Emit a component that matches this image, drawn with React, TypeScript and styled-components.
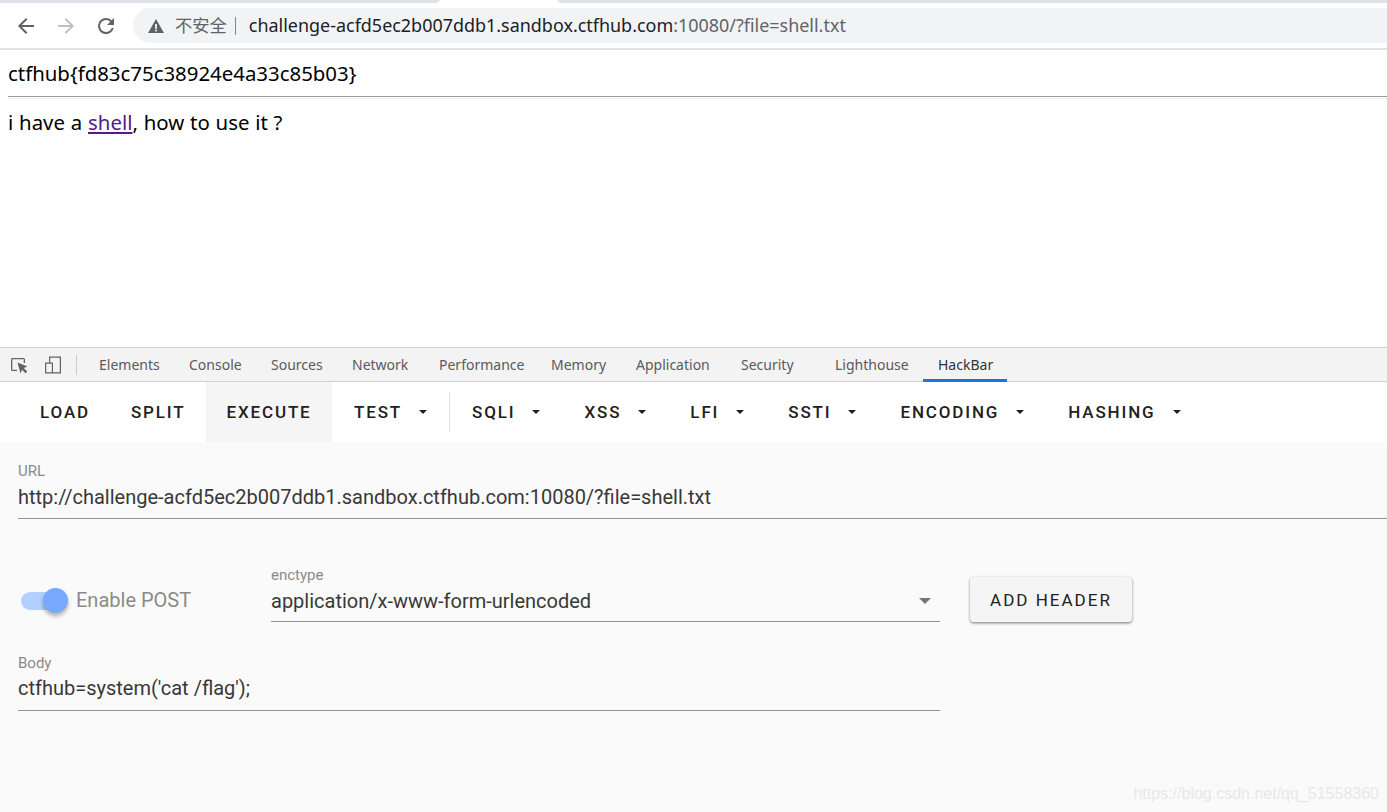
import styled, { createGlobalStyle } from "styled-components";

const GlobalStyle = createGlobalStyle`
  html, body {
    margin: 0;
    padding: 0;
    background: #ffffff;
  }
  body {
    font-family: "Noto Sans", "Noto Sans CJK SC", sans-serif;
  }
`;

const tabs = [
  { label: "Elements", width: 90 },
  { label: "Console", width: 82 },
  { label: "Sources", width: 81 },
  { label: "Network", width: 87 },
  { label: "Performance", width: 112 },
  { label: "Memory", width: 85 },
  { label: "Application", width: 105 },
  { label: "Security", width: 94 },
  { label: "Lighthouse", width: 88 },
];

const menu = [
  { label: "LOAD" },
  { label: "SPLIT" },
  { label: "EXECUTE", active: true },
  { label: "TEST", caret: true, divider: true },
  { label: "SQLI", caret: true },
  { label: "XSS", caret: true },
  { label: "LFI", caret: true },
  { label: "SSTI", caret: true },
  { label: "ENCODING", caret: true },
  { label: "HASHING", caret: true },
];

export default function App() {
  return (
    <>
      <GlobalStyle />
      <Page>
        <TopStrip>
          <CurrentTab />
        </TopStrip>
        <BrowserBar>
          <NavIcon viewBox="0 0 24 24" color="#5f6368">
            <path d="M20 11H7.8l5.6-5.6L12 4l-8 8 8 8 1.4-1.4L7.8 13H20z" />
          </NavIcon>
          <NavIcon viewBox="0 0 24 24" color="#bdc1c6">
            <path d="M12 4l-1.4 1.4 5.6 5.6H4v2h12.2l-5.6 5.6L12 20l8-8z" />
          </NavIcon>
          <NavIcon viewBox="0 0 24 24" color="#5f6368">
            <path d="M17.65 6.35A7.95 7.95 0 0 0 12 4a8 8 0 1 0 7.73 10h-2.08A6 6 0 1 1 12 6c1.66 0 3.14.69 4.22 1.78L13 11h7V4z" />
          </NavIcon>
          <Omnibox>
            <WarnIcon viewBox="0 0 16 16">
              <path d="M8 1 16 15H0z" />
              <rect x="7.100" y="6" width="1.800" height="4.800" fill="#f1f3f4" />
              <rect x="7.100" y="11.600" width="1.800" height="1.800" fill="#f1f3f4" />
            </WarnIcon>
            <Insecure>不安全</Insecure>
            <UrlDivider />
            <UrlHost>challenge-acfd5ec2b007ddb1.sandbox.ctfhub.com</UrlHost>
            <UrlRest>:10080/?file=shell.txt</UrlRest>
          </Omnibox>
        </BrowserBar>

        <Content>
          <Flag>ctfhub{"{"}fd83c75c38924e4a33c85b03{"}"}</Flag>
          <Rule />
          <Line>
            i have a <ShellLink href="#">shell</ShellLink>, how to use it ?
          </Line>
        </Content>

        <DevTools>
          <TabBar>
            <ToolIcon viewBox="0 0 20 20">
              <path d="M8 16H3.500A1.500 1.500 0 0 1 2 14.500v-10A1.500 1.500 0 0 1 3.500 3h11A1.500 1.500 0 0 1 16 4.500V8h-1.300V4.300H3.300v10.400H8z" />
              <path d="M8.500 7.500 18.500 11.500 14.800 13 18.300 16.500 16.500 18.300 13 14.800 11.500 18.500z" />
            </ToolIcon>
            <DeviceIcon viewBox="0 0 20 20">
              <path d="M6 1.500h12v17H2V7.500h4zM7.200 2.700v4.800H10v9.800h6.800V2.700zM3.200 8.700v8.600h5.600V8.700z" />
            </DeviceIcon>
            <TabDivider />
            {tabs.map((tab) => (
              <Tab key={tab.label} $width={tab.width}>
                {tab.label}
              </Tab>
            ))}
            <HackTab>HackBar</HackTab>
          </TabBar>

          <MenuBar>
            {menu.map((item) => (
              <MenuGroup key={item.label}>
                <MenuButton $active={item.active} $caret={item.caret}>
                  {item.label}
                  {item.caret && <Caret />}
                </MenuButton>
                {item.divider && <MenuDivider />}
              </MenuGroup>
            ))}
          </MenuBar>

          <Panel>
            <UrlField>
              <FieldLabel>URL</FieldLabel>
              <FieldValue>http://challenge-acfd5ec2b007ddb1.sandbox.ctfhub.com:10080/?file=shell.txt</FieldValue>
            </UrlField>

            <OptionsRow>
              <SwitchWrap>
                <SwitchTrack />
                <SwitchThumb />
              </SwitchWrap>
              <SwitchLabel>Enable POST</SwitchLabel>
              <SelectField>
                <FieldLabel>enctype</FieldLabel>
                <SelectValue>
                  application/x-www-form-urlencoded
                  <SelectArrow />
                </SelectValue>
              </SelectField>
              <HeaderButton>ADD HEADER</HeaderButton>
            </OptionsRow>

            <BodyField>
              <FieldLabel>Body</FieldLabel>
              <BodyValue>ctfhub=system('cat /flag');</BodyValue>
            </BodyField>

            <Watermark>https://blog.csdn.net/qq_51558360</Watermark>
          </Panel>
        </DevTools>
      </Page>
    </>
  );
}

const Page = styled.div`
  display: flex;
  flex-direction: column;
  width: 1387px;
  height: 812px;
  overflow: hidden;
`;

const TopStrip = styled.div`
  flex-shrink: 0;
  height: 3px;
  padding-left: 437px;
  background: #dee1e6;
`;

const CurrentTab = styled.div`
  width: 123px;
  height: 3px;
  background: #ffffff;
  clip-path: polygon(3px 0, 120px 0, 100% 100%, 0 100%);
`;

const BrowserBar = styled.div`
  display: flex;
  align-items: center;
  flex-shrink: 0;
  height: 45px;
  padding-left: 13.500px;
  border-bottom: 2px solid #dfe1e5;
  background: #ffffff;
`;

const NavIcon = styled.svg<{ color: string }>`
  flex-shrink: 0;
  width: 24px;
  height: 24px;
  margin-right: 16px;
  fill: ${(props) => props.color};
`;

const Omnibox = styled.div`
  display: flex;
  align-items: center;
  flex-grow: 1;
  height: 35px;
  margin-left: -0.500px;
  padding-left: 15px;
  border-radius: 18px 0 0 18px;
  background: #f1f3f4;
  font-size: 17.960px;
  white-space: nowrap;
`;

const WarnIcon = styled.svg`
  width: 16px;
  height: 16px;
  margin-right: 11px;
  fill: #5f6368;
`;

const Insecure = styled.span`
  padding-bottom: 2px;
  color: #5f6368;
  font-family: "Noto Sans CJK SC", sans-serif;
  font-size: 17.300px;
`;

const UrlDivider = styled.span`
  width: 1px;
  height: 18px;
  margin: 0 13px 0 8px;
  background: #80868b;
`;

const UrlHost = styled.span`
  padding-bottom: 2px;
  color: #202124;
`;

const UrlRest = styled.span`
  padding-bottom: 2px;
  color: #5f6368;
`;

const Content = styled.div`
  flex-shrink: 0;
  height: 297px;
  padding-top: 11px;
  box-sizing: border-box;
  background: #ffffff;
  color: #000000;
  font-size: 20.400px;
`;

const Flag = styled.div`
  height: 24px;
  padding-left: 8px;
  line-height: 24px;
`;

const Rule = styled.div`
  height: 1px;
  margin: 11px 0 0 8px;
  border-top: 1px solid #9a9a9a;
  border-bottom: 1px solid #eeeeee;
`;

const Line = styled.div`
  margin-top: 11px;
  padding-left: 8px;
  line-height: 24px;
  word-spacing: 0.500px;
`;

const ShellLink = styled.a`
  color: #551a8b;
`;

const DevTools = styled.div`
  display: flex;
  flex-direction: column;
  flex-grow: 1;
  font-family: Roboto, sans-serif;
`;

const TabBar = styled.div`
  display: flex;
  align-items: center;
  flex-shrink: 0;
  height: 35px;
  box-sizing: border-box;
  border-top: 1px solid #cfcfcf;
  border-bottom: 1px solid #cfcfcf;
  background: #f3f3f3;
`;

const ToolIcon = styled.svg`
  width: 20px;
  height: 20px;
  margin-left: 9px;
  fill: #5f6368;
`;

const DeviceIcon = styled.svg`
  width: 20px;
  height: 20px;
  margin-left: 14px;
  fill: #5f6368;
`;

const TabDivider = styled.div`
  width: 1px;
  height: 20px;
  margin: 0 22px 0 13px;
  background: #cccccc;
`;

const Tab = styled.div<{ $width: number }>`
  width: ${(props) => props.$width}px;
  color: #5a5a5a;
  font-family: "Noto Sans", sans-serif;
  font-size: 14px;
`;

const HackTab = styled.div`
  display: flex;
  align-items: center;
  height: 34px;
  padding: 2px 14px 0 15px;
  box-sizing: border-box;
  border-bottom: 3px solid #1a73e8;
  color: #333333;
  font-family: "Noto Sans", sans-serif;
  font-size: 14px;
`;

const MenuBar = styled.div`
  display: flex;
  align-items: center;
  flex-shrink: 0;
  height: 60px;
  padding-left: 19.500px;
  background: #ffffff;
`;

const MenuGroup = styled.div`
  display: flex;
  align-items: center;
  height: 100%;
`;

const MenuButton = styled.div<{ $active?: boolean; $caret?: boolean }>`
  display: flex;
  align-items: center;
  height: 100%;
  padding: 0 ${(props) => (props.$caret ? "22px" : "20.500px")};
  background: ${(props) => (props.$active ? "#f5f5f5" : "transparent")};
  color: #212121;
  font-size: 17px;
  font-weight: 500;
  letter-spacing: 1.850px;
`;

const Caret = styled.span`
  width: 0;
  height: 0;
  margin-left: 17px;
  border-top: 4px solid #212121;
  border-left: 4px solid transparent;
  border-right: 4px solid transparent;
`;

const MenuDivider = styled.div`
  width: 1px;
  height: 40px;
  background: #e0e0e0;
`;

const Panel = styled.div`
  position: relative;
  flex-grow: 1;
  padding: 21px 0 0 18px;
  background: #fafafa;
`;

const UrlField = styled.div`
  height: 56px;
  box-sizing: border-box;
  border-bottom: 1px solid #949494;
`;

const FieldLabel = styled.div`
  height: 16px;
  color: #8a8a8a;
  font-size: 15px;
  line-height: 16px;
`;

const FieldValue = styled.div`
  margin-top: 5px;
  color: #383838;
  font-size: 20px;
  line-height: 26px;
`;

const BodyValue = styled(FieldValue)`
  margin-top: 4px;
`;

const OptionsRow = styled.div`
  display: flex;
  align-items: flex-start;
  height: 56px;
  margin-top: 48px;
`;

const SwitchWrap = styled.div`
  position: relative;
  flex-shrink: 0;
  width: 50px;
  height: 26px;
  margin: 21px 0 0 3px;
`;

const SwitchTrack = styled.div`
  width: 46px;
  height: 18px;
  margin-top: 4px;
  border-radius: 9px;
  background: #b3d0ff;
`;

const SwitchThumb = styled.div`
  position: absolute;
  top: 0;
  left: 22px;
  width: 25px;
  height: 25px;
  border-radius: 50%;
  background: #76a9ff;
  box-shadow: 0 3px 4px rgba(0, 0, 0, 0.3);
`;

const SwitchLabel = styled.div`
  width: 195px;
  margin: 21px 0 0 5px;
  color: #8a8a8a;
  font-size: 20px;
  line-height: 25px;
`;

const SelectField = styled.div`
  flex-shrink: 0;
  width: 669px;
  height: 55px;
  box-sizing: border-box;
  border-bottom: 1px solid #949494;
`;

const SelectValue = styled.div`
  display: flex;
  align-items: center;
  justify-content: space-between;
  height: 26px;
  margin-top: 5px;
  padding-right: 9px;
  color: #383838;
  font-size: 20px;
`;

const SelectArrow = styled.span`
  width: 0;
  height: 0;
  border-top: 6px solid #757575;
  border-left: 6.500px solid transparent;
  border-right: 6.500px solid transparent;
`;

const HeaderButton = styled.div`
  display: flex;
  align-items: center;
  justify-content: center;
  width: 162px;
  height: 45px;
  margin: 10px 0 0 30px;
  border-radius: 4px;
  background: #f5f5f5;
  box-shadow: 0 1px 3px rgba(0, 0, 0, 0.4), 0 2px 2px rgba(0, 0, 0, 0.1);
  color: #212121;
  font-size: 17px;
  font-weight: 400;
  letter-spacing: 2px;
`;

const BodyField = styled.div`
  width: 922px;
  height: 56px;
  margin-top: 32px;
  box-sizing: border-box;
  border-bottom: 1px solid #949494;
`;

const Watermark = styled.div`
  position: absolute;
  right: 8px;
  bottom: 9px;
  color: #e8e8e8;
  font-family: "Liberation Sans", sans-serif;
  font-size: 16px;
`;
